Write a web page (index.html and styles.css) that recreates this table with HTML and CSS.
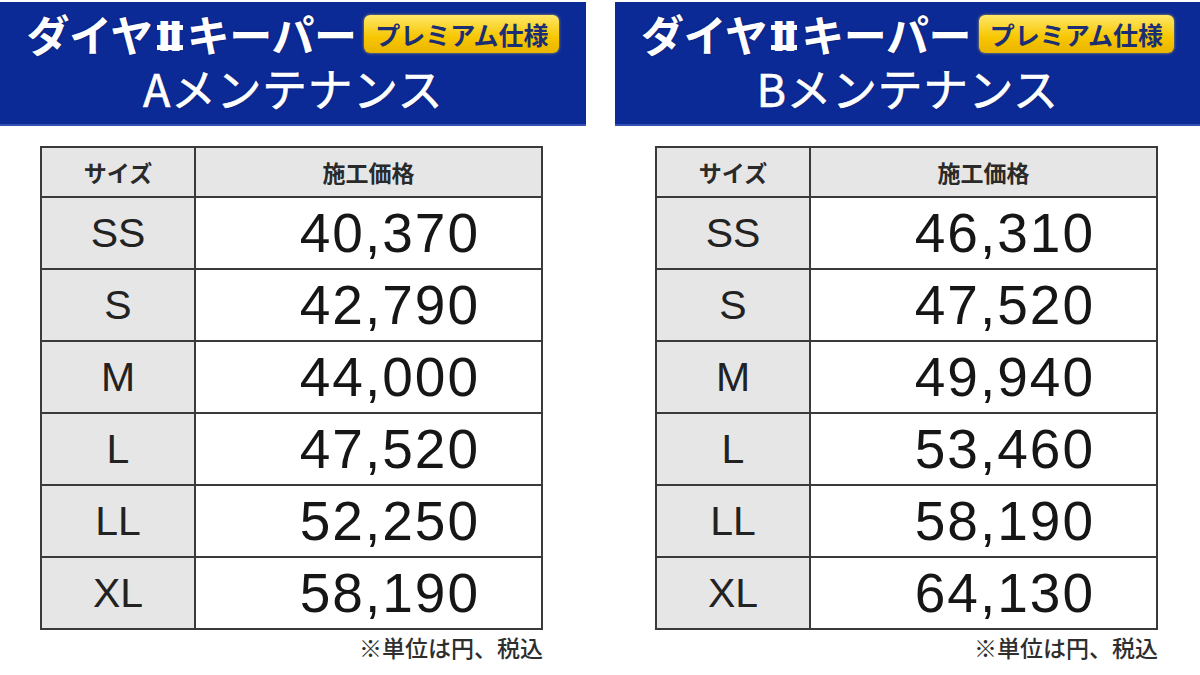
FILE: index.html
```html
<!DOCTYPE html>
<html lang="ja">
<head>
<meta charset="utf-8">
<title>ダイヤⅡキーパー メンテナンス価格</title>
<link rel="stylesheet" href="styles.css">
</head>
<body>
<div class="page">
  <section class="panel">
    <header class="banner">
      <div class="line1"><span class="title">ダイヤ<span class="numeral">Ⅱ</span>キーパー</span><span class="badge">プレミアム仕様</span></div>
      <div class="line2">Aメンテナンス</div>
    </header>
    <table class="price-table">
      <thead>
        <tr><th class="col-size">サイズ</th><th class="col-price">施工価格</th></tr>
      </thead>
      <tbody>
        <tr><td class="size">SS</td><td class="price">40,370</td></tr>
        <tr><td class="size">S</td><td class="price">42,790</td></tr>
        <tr><td class="size">M</td><td class="price">44,000</td></tr>
        <tr><td class="size">L</td><td class="price">47,520</td></tr>
        <tr><td class="size">LL</td><td class="price">52,250</td></tr>
        <tr><td class="size">XL</td><td class="price">58,190</td></tr>
      </tbody>
    </table>
    <p class="note">※単位は円、税込</p>
  </section>
  <section class="panel">
    <header class="banner">
      <div class="line1"><span class="title">ダイヤ<span class="numeral">Ⅱ</span>キーパー</span><span class="badge">プレミアム仕様</span></div>
      <div class="line2">Bメンテナンス</div>
    </header>
    <table class="price-table">
      <thead>
        <tr><th class="col-size">サイズ</th><th class="col-price">施工価格</th></tr>
      </thead>
      <tbody>
        <tr><td class="size">SS</td><td class="price">46,310</td></tr>
        <tr><td class="size">S</td><td class="price">47,520</td></tr>
        <tr><td class="size">M</td><td class="price">49,940</td></tr>
        <tr><td class="size">L</td><td class="price">53,460</td></tr>
        <tr><td class="size">LL</td><td class="price">58,190</td></tr>
        <tr><td class="size">XL</td><td class="price">64,130</td></tr>
      </tbody>
    </table>
    <p class="note">※単位は円、税込</p>
  </section>
</div>
</body>
</html>
```
FILE: styles.css
```css
* { box-sizing: border-box; }
html, body { margin: 0; padding: 0; background: #ffffff; }
body {
  font-family: "Liberation Sans", "Noto Sans CJK JP", sans-serif;
  color: #1c1c1c;
}
.page {
  display: grid;
  grid-template-columns: 586px 585px;
  column-gap: 29px;
  padding-top: 2px;
}
.panel {
  display: flex;
  flex-direction: column;
}
.banner {
  height: 124px;
  background: #0c2a96;
  border-bottom: 2px solid #3550b4;
  color: #ffffff;
  font-family: "Noto Sans CJK JP", sans-serif;
  display: flex;
  flex-direction: column;
  align-items: center;
  padding-top: 5px;
  text-shadow: 0 0 2px rgba(0, 0, 40, 0.5);
}
.line1 {
  display: flex;
  align-items: center;
  gap: 8px;
  height: 52px;
}
.title {
  font-size: 43px;
  font-weight: 700;
  line-height: 1;
  letter-spacing: -0.5px;
}
.numeral {
  display: inline-block;
  width: 26px;
  height: 25px;
  font-family: "Liberation Sans", "DejaVu Sans", "Noto Sans CJK JP", sans-serif;
  font-size: 40px;
  font-weight: 700;
  line-height: 15px;
  text-align: center;
  border-top: 5px solid #ffffff;
  border-bottom: 5px solid #ffffff;
  margin: 0 4px 0 4px;
  vertical-align: 1px;
  letter-spacing: 0;
  text-shadow: none;
}
.badge {
  display: inline-block;
  width: 195px;
  height: 38px;
  line-height: 38px;
  text-align: center;
  border-radius: 6px;
  background: linear-gradient(#ffe768, #f7c600 60%, #e9b400);
  box-shadow: 0 0 3px rgba(255, 220, 60, 0.7);
  color: #1b2d73;
  font-size: 25px;
  font-weight: 700;
  text-shadow: none;
  margin-top: 2px;
}
.line2 {
  font-size: 45px;
  font-weight: 400;
  line-height: 58px;
  letter-spacing: 0.5px;
  -webkit-text-stroke: 0.6px #ffffff;
}
.price-table {
  margin: 20px 0 0 40px;
  width: 503px;
  border-collapse: collapse;
  border: 2px solid #3a3a3a;
}
.price-table th,
.price-table td {
  border: 2px solid #3a3a3a;
  padding: 0;
}
.price-table th {
  height: 50px;
  background: #e6e6e6;
  font-family: "Noto Sans CJK JP", sans-serif;
  font-size: 23px;
  font-weight: 700;
  color: #2a2a2a;
}
.col-size { width: 154px; }
.price-table td { height: 72px; }
.size {
  background: #e6e6e6;
  text-align: center;
  font-size: 41px;
  color: #222222;
}
.price {
  background: #ffffff;
  text-align: right;
  padding-right: 61px !important;
  font-size: 55px;
  letter-spacing: 2px;
  color: #161616;
}
.note {
  margin: 4px 0 0 40px;
  width: 503px;
  text-align: right;
  font-family: "Noto Sans CJK JP", sans-serif;
  font-size: 23px;
  font-weight: 500;
  color: #2e2e2e;
  line-height: 1.2;
}
```
